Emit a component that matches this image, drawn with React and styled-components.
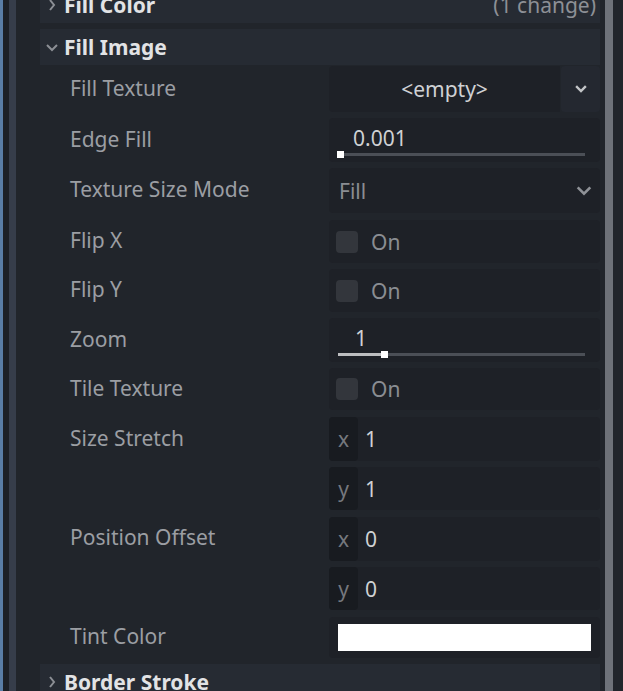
import React from 'react';
import styled, { createGlobalStyle } from 'styled-components';

const GlobalStyle = createGlobalStyle`
  html, body {
    margin: 0;
    padding: 0;
    background: #21252b;
    overflow: hidden;
  }
  body {
    font-family: "Noto Sans", "Open Sans", sans-serif;
  }
`;

const Page = styled.div`
  display: flex;
  height: 691px;
  overflow: hidden;
  background: #21252b;
`;

const Rail = styled.div`
  display: flex;
  flex-shrink: 0;
`;

const Strip = styled.div`
  width: ${p => p.w}px;
  background: ${p => p.c};
`;

const Main = styled.div`
  flex: 1;
  display: flex;
  flex-direction: column;
  padding-left: 24px;
  margin-top: -13px;
`;

const ScrollArea = styled.div`
  width: 23px;
  flex-shrink: 0;
  display: flex;
  padding-left: 5px;
  box-sizing: border-box;
`;

const ScrollThumb = styled.div`
  width: 8px;
  background: #6e7279;
`;

const Header = styled.div`
  height: 36px;
  flex-shrink: 0;
  display: flex;
  align-items: center;
  background: #262b33;
  padding: 0 4px 0 6px;
  margin-top: ${p => p.mt || 0}px;
  color: #e2e3e5;
  font-weight: 700;
  font-size: 21px;
`;

const HeaderIcon = styled.svg`
  width: 12px;
  height: 12px;
  margin-right: 6px;
  flex-shrink: 0;
`;

const HeaderTitle = styled.span`
  flex: 1;
  white-space: nowrap;
`;

const Changes = styled.span`
  color: #8d9096;
  font-weight: 400;
`;

const Row = styled.div`
  display: grid;
  grid-template-columns: 289px 271px;
  align-items: start;
  margin-top: ${p => (p.mt === undefined ? 6 : p.mt)}px;
`;

const Label = styled.div`
  height: ${p => p.h || 44}px;
  box-sizing: border-box;
  display: flex;
  align-items: center;
  padding: 0 0 3px 30px;
  color: #9b9ea3;
  font-size: 21px;
  white-space: nowrap;
`;

const Stack = styled.div`
  display: flex;
  flex-direction: column;
  gap: 6px;
`;

const Box = styled.div`
  height: ${p => p.h || 44}px;
  box-sizing: border-box;
  background: #1e2127;
  border-radius: 4px;
  display: flex;
  align-items: center;
  position: relative;
  font-size: 21px;
  color: ${p => (p.dim ? '#8a8d92' : '#cfd1d4')};
  padding: ${p => p.pad || '0'};
`;

const PickerRow = styled.div`
  display: flex;
  height: 46px;
`;

const PickerMain = styled.div`
  flex: 1;
  background: #1e2127;
  border-radius: 4px 0 0 4px;
  display: flex;
  align-items: center;
  justify-content: center;
  color: #cfd1d4;
  font-size: 21px;
`;

const PickerButton = styled.div`
  width: 39px;
  margin-left: 1px;
  background: #242830;
  border-radius: 4px;
  display: flex;
  align-items: center;
  justify-content: center;
`;

const SliderValue = styled.span`
  position: absolute;
  left: ${p => p.left}px;
  top: 6px;
`;

const Track = styled.div`
  position: absolute;
  left: 9px;
  right: 15px;
  bottom: 6px;
  height: 3px;
  background: #4b4f56;
`;

const TrackFill = styled.div`
  position: absolute;
  left: 0;
  top: 0;
  bottom: 0;
  background: #bdbec0;
`;

const Thumb = styled.div`
  position: absolute;
  top: -2px;
  width: 7px;
  height: 7px;
  margin-left: -1px;
  background: #ffffff;
`;

const Checkbox = styled.div`
  width: 22px;
  height: 22px;
  border-radius: 4px;
  background: #33363c;
  margin-right: 13px;
`;

const Axis = styled.div`
  width: 29px;
  height: 100%;
  background: #181b20;
  border-radius: 4px;
  display: flex;
  align-items: center;
  justify-content: center;
  color: #75787e;
  margin-right: 7px;
`;

const Swatch = styled.div`
  flex: 1;
  height: 27px;
  background: #ffffff;
`;

const Spacer = styled.div`
  flex: 1;
`;

const Chevron = ({ dir = 'down', size = 12, color = '#9a9da2', w = 2 }) => {
  const pts = dir === 'down' ? '2,4 6,8 10,4' : '4,2 8,6 4,10';
  return (
    <svg width={size} height={size} viewBox="0 0 12 12">
      <polyline points={pts} fill="none" stroke={color} strokeWidth={w} strokeLinecap="square" />
    </svg>
  );
};

const SectionHeader = ({ title, open, extra, mt }) => (
  <Header mt={mt}>
    <HeaderIcon viewBox="0 0 12 12">
      <polyline
        points={open ? '1,4 6,9 11,4' : '4,1 8,6 4,11'}
        fill="none"
        stroke="#8c8f95"
        strokeWidth="2"
      />
    </HeaderIcon>
    <HeaderTitle>{title}</HeaderTitle>
    {extra && <Changes>{extra}</Changes>}
  </Header>
);

const Slider = ({ value, ratio, textLeft }) => (
  <Box>
    <SliderValue left={textLeft}>{value}</SliderValue>
    <Track>
      <TrackFill style={{ width: `${ratio * 100}%` }} />
      <Thumb style={{ left: `${ratio * 100}%` }} />
    </Track>
  </Box>
);

const Check = ({ h }) => (
  <Box dim h={h} pad="0 0 0 7px">
    <Checkbox />
    On
  </Box>
);

const Vector = ({ x, y }) => (
  <Stack>
    <Box h={44}>
      <Axis>x</Axis>
      {x}
    </Box>
    <Box h={43}>
      <Axis>y</Axis>
      {y}
    </Box>
  </Stack>
);

export default function App() {
  return (
    <Page>
      <GlobalStyle />
      <Rail>
        <Strip w={3} c="#5a7ea6" />
        <Strip w={6} c="#1d2127" />
        <Strip w={7} c="#363d4a" />
      </Rail>
      <Main>
        <SectionHeader title="Fill Color" extra="(1 change)" />
        <SectionHeader title="Fill Image" open mt={6} />

        <Row mt={1}>
          <Label h={46}>Fill Texture</Label>
          <PickerRow>
            <PickerMain>&lt;empty&gt;</PickerMain>
            <PickerButton>
              <Chevron dir="down" color="#c3c5c8" size={12} w={2.4} />
            </PickerButton>
          </PickerRow>
        </Row>

        <Row>
          <Label>Edge Fill</Label>
          <Slider value="0.001" ratio={0} textLeft={24} />
        </Row>

        <Row mt={6}>
          <Label h={45}>Texture Size Mode</Label>
          <Box dim h={45} pad="0 8px 0 10px">
            Fill
            <Spacer />
            <Chevron dir="down" color="#8f9297" size={16} w={2} />
          </Box>
        </Row>

        <Row mt={7}>
          <Label h={43}>Flip X</Label>
          <Check h={43} />
        </Row>

        <Row mt={6}>
          <Label h={43}>Flip Y</Label>
          <Check h={43} />
        </Row>

        <Row mt={6}>
          <Label>Zoom</Label>
          <Slider value="1" ratio={0.18} textLeft={26} />
        </Row>

        <Row mt={6}>
          <Label h={42}>Tile Texture</Label>
          <Check h={42} />
        </Row>

        <Row mt={7}>
          <Label>Size Stretch</Label>
          <Vector x="1" y="1" />
        </Row>

        <Row mt={7}>
          <Label h={43}>Position Offset</Label>
          <Vector x="0" y="0" />
        </Row>

        <Row mt={7}>
          <Label h={41}>Tint Color</Label>
          <Box h={41} pad="0 9px">
            <Swatch />
          </Box>
        </Row>

        <SectionHeader title="Border Stroke" mt={6} />
      </Main>
      <ScrollArea>
        <ScrollThumb />
      </ScrollArea>
    </Page>
  );
}
